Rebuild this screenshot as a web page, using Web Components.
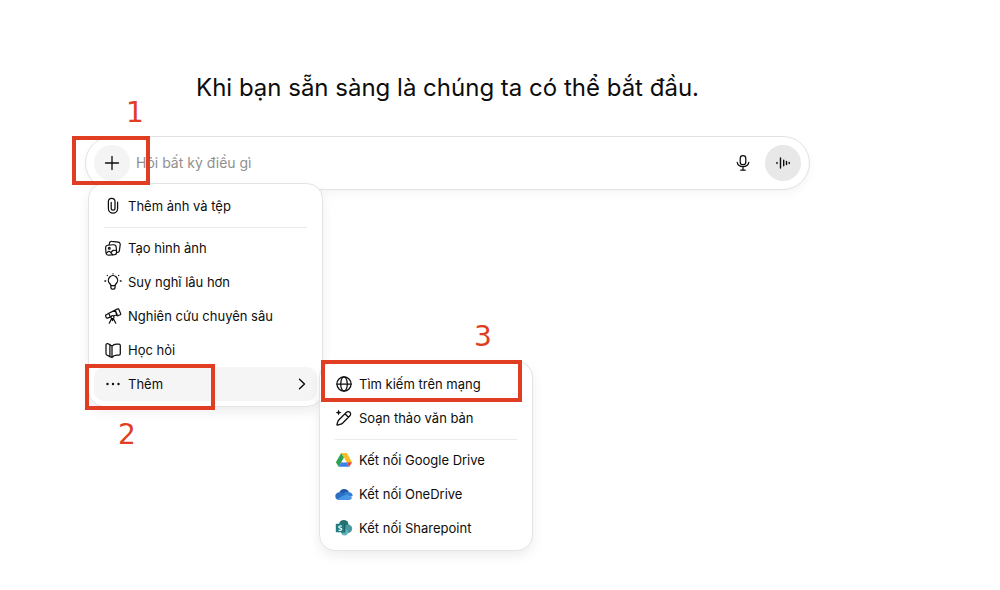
<!DOCTYPE html>
<html lang="vi">
<head>
<meta charset="utf-8">
<meta name="viewport" content="width=device-width, initial-scale=1">
<title>Khi bạn sẵn sàng là chúng ta có thể bắt đầu.</title>
<style>
  body { margin: 0; background: #fff; color: #0d0d0d; font-family: Inter, "Liberation Sans", sans-serif; }
</style>
</head>
<body>
<chat-home>
  <span slot="title">Khi bạn sẵn sàng là chúng ta có thể bắt đầu.</span>
  <chat-composer placeholder="Hỏi bất kỳ điều gì"></chat-composer>
  <menu-panel slot="menu" label="Công cụ">
    <menu-item icon="clip">Thêm ảnh và tệp</menu-item>
    <menu-divider></menu-divider>
    <menu-item icon="images">Tạo hình ảnh</menu-item>
    <menu-item icon="bulb">Suy nghĩ lâu hơn</menu-item>
    <menu-item icon="telescope">Nghiên cứu chuyên sâu</menu-item>
    <menu-item icon="book">Học hỏi</menu-item>
    <menu-item icon="dots" active>Thêm
      <menu-panel slot="submenu" label="Thêm" class="sub">
        <menu-item icon="globe">Tìm kiếm trên mạng</menu-item>
        <menu-item icon="pencil">Soạn thảo văn bản</menu-item>
        <menu-divider></menu-divider>
        <menu-item icon="gdrive">Kết nối Google Drive</menu-item>
        <menu-item icon="onedrive">Kết nối OneDrive</menu-item>
        <menu-item icon="sharepoint">Kết nối Sharepoint</menu-item>
      </menu-panel>
    </menu-item>
  </menu-panel>
  <step-mark slot="marks" class="one">1</step-mark>
  <step-mark slot="marks" class="two">2</step-mark>
  <step-mark slot="marks" class="three">3</step-mark>
</chat-home>

<script>
const line = (body, w = 1.4) =>
  `<g fill="none" stroke="currentColor" stroke-width="${w}" stroke-linecap="round" stroke-linejoin="round">${body}</g>`;

const ICONS = {
  plus: line('<path d="M9 2.5v13M2.5 9h13"/>', 1.3),
  mic: line('<rect x="6.2" y="1.7" width="5.6" height="9" rx="2.8"/><path d="M3.2 8.3a5.9 5.3 0 0 0 11.6 0M9 13.600v2.600M6.800 16.2h4.400"/>', 1.25),
  wave: line('<path d="M3 8.400v1.200M6.500 4v10M9.700 6.200v5.600M12.500 7.500v3M15.200 8.500v1"/>', 1.4),
  clip: line('<path d="M7.2 5.4v5.8a1.9 1.9 0 0 0 3.8 0V4.6a3.3 3.3 0 0 0-6.6 0v7a4.5 4.5 0 0 0 9.2 0V5.2"/>', 1.25),
  images: line('<rect x="1.8" y="6" width="10.6" height="10" rx="2.5" transform="rotate(-5 7 11)"/><path d="M5.2 5.6 5.5 4a2 2 0 0 1 2.3-1.7l6.5.9A2.2 2.2 0 0 1 16.2 5.7l-.8 5.9a2.2 2.2 0 0 1-2.3 1.9"/><circle cx="5.3" cy="9.2" r=".9"/><path d="m2.6 14 1.2-1.2c.7-.7 1.6-.6 2.3.1l2.7 2.9M7.2 13.5c1-2.1 2.8-2.900 5.200-1.700"/>', 1.2),
  bulb: line('<path d="M6.9 12.700c0-1-.6-1.500-1.200-2.200a4.600 4.600 0 1 1 6.600 0c-.6.7-1.200 1.200-1.200 2.200zM6.900 12.700v1.900a1.600 1.600 0 0 0 1.600 1.600h1a1.600 1.600 0 0 0 1.600-1.600v-1.900"/><path d="M9 .8v.1M3.300 2.500v.1M14.700 2.500v.1M.9 8h.8M16.300 8h.8"/>', 1.3),
  telescope: line('<path d="m4.800 6.200 6.400-3.100 2 4.600-3.100 1M7 9.800l-1 .4M11.200 3l2.500-1.100a.8.8 0 0 1 1.100.4l1.900 4.400a.8.8 0 0 1-.4 1.100l-2.500 1a.8.8 0 0 1-1-.4zM4.800 6.200l1.500 3.900-3 1a.8.800 0 0 1-1-.4l-.7-1.800a.8.8 0 0 1 .4-1z"/><circle cx="8.500" cy="10.200" r="1.500"/><path d="m7.700 11.600-2.500 4.600M9.300 11.600l2.500 4.600M8.500 11.900v1.700"/>', 1.2),
  book: line('<path d="M5.900 3.400v12.200l-2.700-1.300a2 2 0 0 1-1.200-1.800V4a1.400 1.400 0 0 1 2.100-1.200L8 5v11.500l-2.100-.9M8 5.200c1.300-1.500 2.700-2 4.500-2H15a1.300 1.300 0 0 1 1.300 1.300v8.300a1.300 1.300 0 0 1-1.300 1.300h-2c-2.200 0-3.800.6-5 2.300"/>', 1.25),
  dots: '<g fill="currentColor"><circle cx="3.5" cy="9" r="1.2"/><circle cx="9" cy="9" r="1.2"/><circle cx="14.5" cy="9" r="1.2"/></g>',
  chevron: line('<path d="m6.500 4.200 5 4.800-5 4.800"/>', 1.4),
  globe: line('<circle cx="9" cy="9" r="7.1"/><ellipse cx="9" cy="9" rx="3.3" ry="7.1"/><path d="M1.9 9h14.2"/>', 1.25),
  pencil: line('<path d="m4 10.7 7.500-7.400a2.400 2.400 0 0 1 3.400 0 2.400 2.400 0 0 1 0 3.400l-7.400 7.500a4 4 0 0 1-1.700 1l-3.300.9a.5.500 0 0 1-.6-.6L3 12.300a4 4 0 0 1 1-1.600zM10 4.800l3.400 3.400"/>', 1.25) +
    '<path fill="currentColor" d="M3.600.6 4.400 2.800l2.200.8-2.200.8-.8 2.200-.8-2.200L.6 3.600l2.200-.8z"/>',
  gdrive: '<path fill="#f9bd22" d="M6.200 2h5.600l5.300 9.200h-5.500z"/><path fill="#2fa250" d="M6.200 2 9 6.700 6.400 11.200 3.600 15.800.9 11.200z"/><path fill="#3f7de8" d="M6.400 11.200h5.200l2.800 4.600H3.600z"/><path fill="#df4b38" d="M11.600 11.200h5.500l-2.700 4.600z"/><path fill="#fff" d="m9 6.800 2.600 4.400H6.400z"/>',
  onedrive: '<path fill="#2459a8" d="M4.300 7.300A5.200 5.200 0 0 1 13.900 7L9.500 11z"/><path fill="#2b6fc4" d="M4.400 7.200c1.400-.2 2.500.2 3.500.8l5.100 3.200-9.300 3.700A4 4 0 0 1 .3 11c0-2.100 1.700-3.700 4.100-3.800z"/><path fill="#3480d2" d="M8.200 8.200c2-1.200 3.900-1.500 5.600-1.200 2.300.3 3.900 1.900 3.900 4.100l-2.700 1z"/><path fill="#4797e6" d="m2.100 14.100 8-4.300 7.200 3a3.600 3.600 0 0 1-3.100 2.100H4.300c-.9 0-1.600-.3-2.200-.8z"/>',
  sharepoint: '<circle cx="8.8" cy="5.6" r="4.700" fill="#276f70"/><circle cx="13" cy="9.800" r="4.200" fill="#4a9aa0"/><circle cx="9.600" cy="13.300" r="3.300" fill="#62b5bb"/><path d="M6 5h4.300v8.500H6z" fill="#1d5a5e"/><rect x=".8" y="4.800" width="8.500" height="8.500" rx=".8" fill="#1f7c80"/><path fill="none" stroke="#fff" stroke-width="1.100" d="M6.700 7.400c-.8-.7-3-.7-3 .5 0 1.500 3.100.9 3.100 2.400 0 1.300-2.400 1.300-3.300.5"/>'
};
const icon = name => `<svg viewBox="0 0 18 18" width="18" height="18" aria-hidden="true">${ICONS[name]}</svg>`;

class ChatHome extends HTMLElement {
  connectedCallback() {
    this.attachShadow({ mode: 'open' }).innerHTML = `
      <style>
        :host { display: block; box-sizing: border-box; min-height: 100vh; padding: 68px 19% 40px 8.5%; }
        h1 { margin: 0 0 28px; font-size: 24px; line-height: 40px; font-weight: 400; text-align: center; }
        .stage { position: relative; }
        .menu { position: absolute; top: 47px; left: 3px; width: 235px; z-index: 1; }
        ::slotted(step-mark) { z-index: 3; }
      </style>
      <main>
        <h1><slot name="title"></slot></h1>
        <div class="stage">
          <slot></slot>
          <div class="menu"><slot name="menu"></slot></div>
          <slot name="marks"></slot>
        </div>
      </main>`;
  }
}

class ChatComposer extends HTMLElement {
  connectedCallback() {
    const text = this.getAttribute('placeholder');
    this.attachShadow({ mode: 'open' }).innerHTML = `
      <style>
        :host { display: block; }
        form { display: flex; align-items: center; gap: 6px; padding: 8px; border: 1px solid #e2e2e2; border-radius: 27px;
          background: #fff; box-shadow: 0 4px 8px rgba(0,0,0,.04); }
        button { display: grid; place-items: center; width: 36px; height: 36px; padding: 0; border: 0; border-radius: 50%;
          background: none; color: #0d0d0d; }
        .plus { background: #f4f4f4; }
        .voice { background: #e8e8e8; }
        .mic { width: 32px; }
        input { flex: 1; min-width: 0; padding: 0; border: 0; outline: 0; background: none; font: inherit; font-size: 14px; line-height: 24px; }
        input::placeholder { color: #8f8f8f; opacity: 1; }
      </style>
      <form>
        <button type="button" class="plus" aria-label="Thêm">${icon('plus')}</button>
        <input type="text" aria-label="${text}" placeholder="${text}">
        <button type="button" class="mic" aria-label="Đọc chính tả">${icon('mic')}</button>
        <button type="button" class="voice" aria-label="Giọng nói">${icon('wave')}</button>
      </form>`;
  }
}

class MenuPanel extends HTMLElement {
  connectedCallback() {
    this.attachShadow({ mode: 'open' }).innerHTML = `
      <style>
        :host { display: block; box-sizing: border-box; padding: 5px; border: 1px solid #e4e4e4; border-radius: 16px;
          background: #fff; box-shadow: 0 5px 12px rgba(0,0,0,.07); }
      </style>
      <slot></slot>`;
    this.setAttribute('role', 'menu');
    this.setAttribute('aria-label', this.getAttribute('label'));
  }
}

class MenuDivider extends HTMLElement {
  connectedCallback() {
    this.attachShadow({ mode: 'open' }).innerHTML = `
      <style>
        :host { display: block; padding: 4px 10px 3px; }
        hr { height: 1px; margin: 0; border: 0; background: #ebebeb; }
      </style>
      <hr>`;
  }
}

class MenuItem extends HTMLElement {
  connectedCallback() {
    const active = this.hasAttribute('active');
    this.attachShadow({ mode: 'open' }).innerHTML = `
      <style>
        :host { display: block; position: relative; }
        button { display: flex; align-items: center; gap: 6px; width: 100%; height: 34px; padding: 0 6px 0 10px; border: 0;
          border-radius: 10px; background: none; color: inherit; font: inherit; font-size: 13px; line-height: 20px; text-align: left; }
        :host([active]) button { background: #f5f5f5; }
        svg { flex: none; }
        .label { flex: 1; white-space: nowrap; }
        ::slotted(menu-panel) { position: absolute; top: -6px; left: calc(100% + 2px); width: 214px; z-index: 2; }
      </style>
      <button type="button" role="menuitem"${active ? ' aria-haspopup="menu" aria-expanded="true"' : ''}>
        ${icon(this.getAttribute('icon'))}<span class="label"><slot></slot></span>${active ? icon('chevron') : ''}
      </button>
      <slot name="submenu"></slot>`;
  }
}

class StepMark extends HTMLElement {
  connectedCallback() {
    this.attachShadow({ mode: 'open' }).innerHTML = `
      <style>
        :host { position: absolute; box-sizing: border-box; border: 4px solid #e03e23; color: #e03e23; pointer-events: none;
          font: 28px/32px "DejaVu Sans", sans-serif; }
        :host(.one) { left: -13px; top: 0; width: 78px; height: 49px; --x: 50px; --y: -43px; }
        :host(.two) { left: 0; top: 228px; width: 130px; height: 46px; --x: 29px; --y: 51px; }
        :host(.three) { left: 236px; top: 224px; width: 201px; height: 42px; --x: 149px; --y: -43px; }
        span { position: absolute; left: var(--x); top: var(--y); }
      </style>
      <span><slot></slot></span>`;
  }
}

customElements.define('chat-home', ChatHome);
customElements.define('chat-composer', ChatComposer);
customElements.define('menu-panel', MenuPanel);
customElements.define('menu-divider', MenuDivider);
customElements.define('menu-item', MenuItem);
customElements.define('step-mark', StepMark);
</script>
</body>
</html>
